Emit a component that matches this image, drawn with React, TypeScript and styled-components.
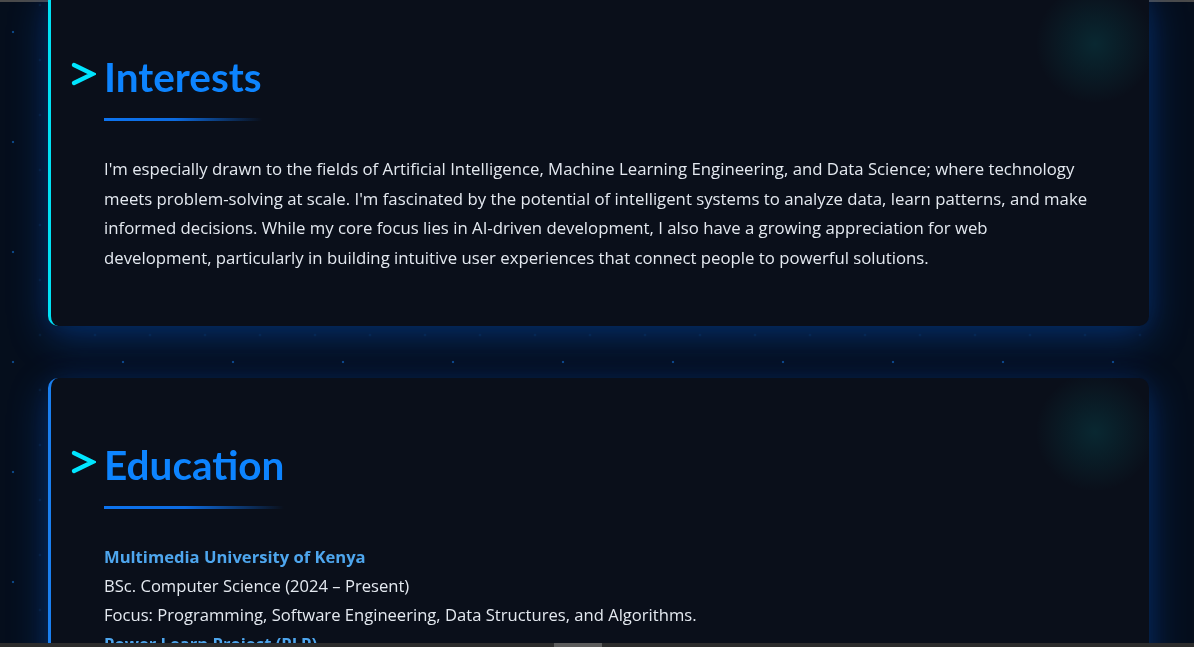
import * as React from 'react'
import styled, { createGlobalStyle } from 'styled-components'

const GlobalStyle = createGlobalStyle`
  html, body {
    margin: 0;
    padding: 0;
    height: 100%;
    overflow: hidden;
  }

  body {
    background-color: #050e1c;
    background-image:
      radial-gradient(circle, #0c4683 1.1px, transparent 1.6px),
      radial-gradient(circle, #0a2c4e 0.7px, transparent 1.1px);
    background-size: 110px 110px, 55px 55px;
    background-position: -42px -23px, 12.5px -22.5px;
    font-family: 'Segoe UI', 'Open Sans', 'Noto Sans', sans-serif;
    color: #e4e9f0;
  }
`

const Page = styled.main`
  display: flex;
  flex-direction: column;
  gap: 52px;
  margin-top: -10px;
  padding: 0 45px 0 48px;
`

const Card = styled.section<{ $accent: string }>`
  position: relative;
  overflow: hidden;
  background: #0a0f1a;
  border-left: 3px solid ${(p) => p.$accent};
  border-radius: 10px;
  padding: 63px 56px 54px 53px;
  box-shadow: 0 12px 40px rgba(0, 110, 255, 0.3), 0 0 24px rgba(0, 110, 255, 0.1);

  &::before {
    content: '';
    position: absolute;
    top: -6px;
    right: -6px;
    width: 120px;
    height: 120px;
    border-radius: 50%;
    background: radial-gradient(circle, rgba(0, 190, 190, 0.14) 0%, rgba(0, 190, 190, 0.05) 45%, transparent 70%);
    pointer-events: none;
  }
`

const Title = styled.h2`
  position: relative;
  display: inline-block;
  margin: 0 0 33px;
  padding-bottom: 20px;
  font-family: 'Segoe UI', Lato, sans-serif;
  font-size: 40.5px;
  line-height: 48px;
  font-weight: 700;
  color: #0d84ff;

  &::after {
    content: '';
    position: absolute;
    left: 0;
    bottom: 0;
    width: 100%;
    height: 3px;
    background: linear-gradient(90deg, #0d74f0 0%, #0d6be0 45%, rgba(13, 100, 220, 0) 100%);
  }
`

const Chevron = styled.svg`
  position: absolute;
  left: -33px;
  top: 9px;
  width: 25px;
  height: 24px;
`

const Text = styled.p`
  margin: 0;
  font-size: 16.75px;
  line-height: 29.6px;
`

const School = styled.div`
  font-size: 16.6px;
  line-height: 29px;
  font-weight: 700;
  color: #4ea6ee;
`

const Line = styled.div`
  font-size: 16.6px;
  line-height: 29px;
`

const TopEdge = styled.div`
  position: fixed;
  top: 0;
  left: 0;
  right: 0;
  height: 2px;
  background: #4a4a4a;
`

const ScrollBar = styled.div`
  position: fixed;
  left: 0;
  right: 0;
  bottom: 0;
  height: 4px;
  background: #2c2c2c;

  &::after {
    content: '';
    position: absolute;
    left: 554px;
    width: 48px;
    top: 0;
    bottom: 0;
    background: #5c5c5c;
  }
`

const Heading = ({ children }: { children: React.ReactNode }) => (
  <Title>
    <Chevron viewBox="0 0 25 24" fill="none">
      <path d="M3 3 L21.5 12 L3 21" stroke="#00e5ff" strokeWidth="4.2" strokeLinecap="round" strokeLinejoin="miter" />
    </Chevron>
    {children}
  </Title>
)

export default function App() {
  return (
    <>
      <GlobalStyle />
      <TopEdge />
      <Page>
        <Card $accent="#00e1f5">
          <Heading>Interests</Heading>
          <Text>
            I'm especially drawn to the fields of Artificial Intelligence, Machine Learning Engineering, and Data Science; where technology meets problem-solving at scale. I'm fascinated by the potential of intelligent systems to analyze data, learn patterns, and make informed decisions. While my core focus lies in AI-driven development, I also have a growing appreciation for web development, particularly in building intuitive user experiences that connect people to powerful solutions.
          </Text>
        </Card>
        <Card $accent="#1a7ff0">
          <Heading>Education</Heading>
          <School>Multimedia University of Kenya</School>
          <Line>BSc. Computer Science (2024 – Present)</Line>
          <Line>Focus: Programming, Software Engineering, Data Structures, and Algorithms.</Line>
          <School>Power Learn Project (PLP)</School>
          <Line>Software Development Program</Line>
        </Card>
      </Page>
      <ScrollBar />
    </>
  )
}
